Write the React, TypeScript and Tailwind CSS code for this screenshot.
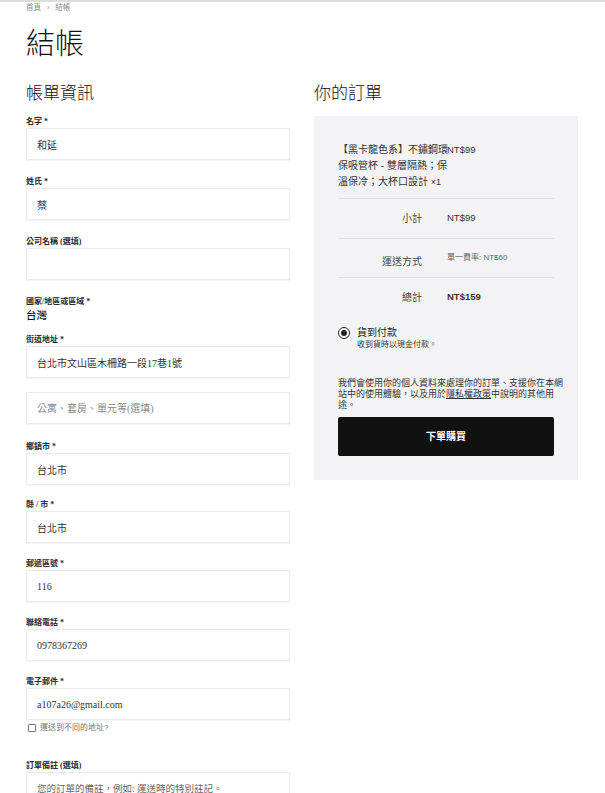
import React from 'react';

const serif = 'font-["Liberation_Serif","Noto_Sans_CJK_TC",serif]';
const sans = 'font-["Liberation_Sans","Noto_Sans_CJK_TC",sans-serif]';

interface FieldProps {
    label: string;
    value?: string;
    placeholder?: string;
    className?: string;
}

const Field: React.FC<FieldProps> = ({ label, value, placeholder, className = '' }) => (
    <div className={className}>
        <label className="block text-[8px] leading-[12px] font-bold text-[#2b2b2b]">{label}</label>
        <Input value={value} placeholder={placeholder} />
    </div>
);

const Input: React.FC<{ value?: string; placeholder?: string }> = ({ value, placeholder }) => (
    <input
        readOnly
        defaultValue={value}
        placeholder={placeholder}
        className={`${serif} block h-8 w-full border border-[#ebebeb] bg-white px-[10px] text-[10px] text-[#333] shadow-[0_1px_1px_rgba(0,0,0,0.04)] outline-none placeholder:text-[#888]`}
    />
);

export default function App() {
    return (
        <div className={`${serif} min-h-[793px] border-t-2 border-[#dcdcdc] bg-white text-[#222]`}>
            <div className="px-[26px]">
                {/* breadcrumb */}
                <div className={`${sans} flex items-center gap-[6px] text-[7.5px] leading-[12px] text-[#8a8a8a]`}>
                    <span>首頁</span>
                    <span className="text-[7px]">›</span>
                    <span>結帳</span>
                </div>

                <h1 className='mt-[10px] font-["Noto_Sans_CJK_TC",sans-serif] text-[29px] leading-[35px] font-light text-[#111]'>結帳</h1>

                <div className="mt-[21px] grid grid-cols-[264px_264px] gap-x-6">
                    {/* billing */}
                    <div>
                        <h2 className='font-["Noto_Sans_CJK_TC",sans-serif] text-[17px] leading-[24px] font-light text-[#111]'>帳單資訊</h2>

                        <Field className="mt-3" label="名字 *" value="和延" />
                        <Field className="mt-4" label="姓氏 *" value="蔡" />
                        <Field className="mt-4" label="公司名稱 (選填)" />

                        <div className="mt-4">
                            <div className="text-[8px] leading-[12px] font-bold text-[#2b2b2b]">國家/地區或區域 *</div>
                            <div className={`${sans} text-[10.5px] leading-[14px] font-medium text-[#111]`}>台灣</div>
                        </div>

                        <Field className="mt-3" label="街道地址 *" value="台北市文山區木柵路一段17巷1號" />
                        <div className="mt-[14px]">
                            <Input placeholder="公寓、套房、單元等(選填)" />
                        </div>

                        <Field className="mt-[17px]" label="鄉鎮市 *" value="台北市" />
                        <Field className="mt-[14px]" label="縣 / 市 *" value="台北市" />
                        <Field className="mt-[15px]" label="郵遞區號 *" value="116" />
                        <Field className="mt-[15px]" label="聯絡電話 *" value="0978367269" />
                        <Field className="mt-[15px]" label="電子郵件 *" value="a107a26@gmail.com" />

                        <div className={`${sans} mt-[2px] flex items-center gap-[4px] pl-[2px] text-[8px] leading-[12px] text-[#777]`}>
                            <span className="inline-block h-[8px] w-[8px] rounded-[1px] border border-[#777] bg-white" />
                            <span>運送到不同的地址?</span>
                        </div>

                        <div className="mt-[26px]">
                            <label className="block text-[8px] leading-[12px] font-bold text-[#2b2b2b]">訂單備註 (選填)</label>
                            <textarea
                                readOnly
                                placeholder="您的訂單的備註，例如: 運送時的特別註記。"
                                className={`${serif} block h-[70px] w-full resize-none border border-[#ebebeb] bg-white px-[10px] pt-[9px] text-[9.5px] text-[#333] outline-none placeholder:text-[#666]`}
                            />
                        </div>
                    </div>

                    {/* order */}
                    <div>
                        <h2 className='font-["Noto_Sans_CJK_TC",sans-serif] text-[17px] leading-[24px] font-light text-[#111]'>你的訂單</h2>

                        <div className="mt-3 bg-[#f3f3f5] px-6 pt-6 pb-6">
                            <div className={`${sans} text-[#333]`}>
                                <div className="grid grid-cols-[109px_1fr] pt-[2px] pb-2 text-[10px] leading-[16px]">
                                    <div className="whitespace-nowrap">
                                        <div>【黑卡龍色系】不鏽鋼環</div>
                                        <div>保吸管杯 - 雙層隔熱；保</div>
                                        <div>
                                            溫保冷；大杯口設計 <span className="text-[9px]">×1</span>
                                        </div>
                                    </div>
                                    <div className="text-[9.5px]">NT$99</div>
                                </div>

                                <div className="grid h-10 grid-cols-[109px_1fr] items-center border-t border-[#e1e1e4]">
                                    <div className="pr-[25px] text-right text-[10px] text-[#444]">小計</div>
                                    <div className="text-[9.5px]">NT$99</div>
                                </div>
                                <div className="grid h-[39px] grid-cols-[109px_1fr] items-center border-t border-[#e1e1e4]">
                                    <div className="pr-[25px] pt-[6px] text-right text-[10px] text-[#444]">運送方式</div>
                                    <div className="text-[8px] text-[#666]">單一費率: NT$60</div>
                                </div>
                                <div className="grid h-10 grid-cols-[109px_1fr] items-center border-t border-[#e1e1e4]">
                                    <div className="pr-[25px] text-right text-[10px] text-[#444]">總計</div>
                                    <div className="text-[9.5px] font-bold text-[#333]">NT$159</div>
                                </div>
                            </div>

                            {/* payment */}
                            <div className="mt-[10px]">
                                <div className={`${sans} flex items-center gap-[7px] text-[10px] leading-[12px] text-[#222]`}>
                                    <span className="flex h-[12px] w-[12px] items-center justify-center rounded-full border-[1.5px] border-[#222] bg-white">
                                        <span className="h-[6px] w-[6px] rounded-full bg-[#222]" />
                                    </span>
                                    <span>貨到付款</span>
                                </div>
                                <div className="pl-[19px] text-[8px] leading-[12px] text-[#333]">收到貨時以現金付款。</div>
                            </div>

                            <p className="mt-[27px] whitespace-nowrap text-[9px] leading-[11px] text-[#333]">
                                我們會使用你的個人資料來處理你的訂單、支援你在本網
                                <br />
                                站中的使用體驗，以及用於<span className="underline">隱私權政策</span>中說明的其他用
                                <br />
                                途。
                            </p>

                            <button className={`${sans} mt-[6px] flex h-[39px] w-full items-center justify-center rounded-[2px] bg-[#111] text-[10px] font-bold text-white`}>
                                下單購買
                            </button>
                        </div>
                    </div>
                </div>
            </div>
        </div>
    );
}
